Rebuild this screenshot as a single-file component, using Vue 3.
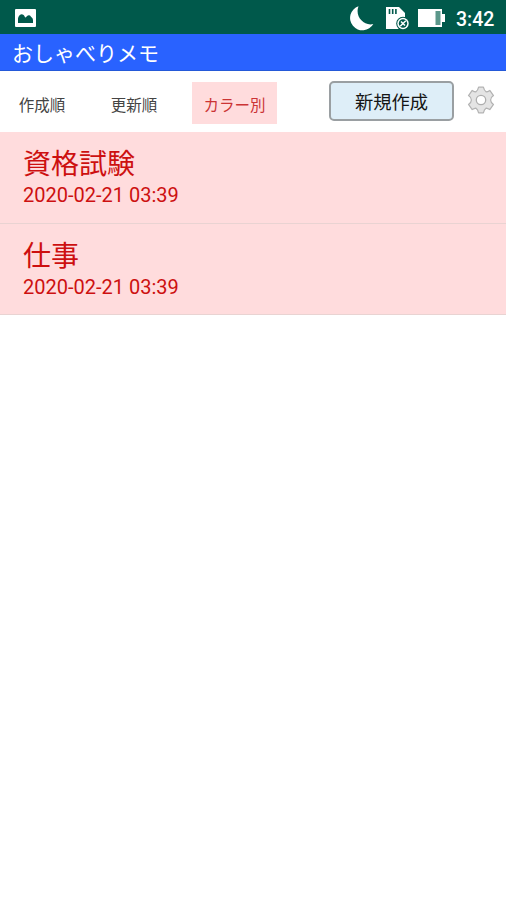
<script setup>
import { ref } from 'vue'

const tabs = ['作成順', '更新順', 'カラー別']
const active = ref(2)
const memos = [
  { title: '資格試験', date: '2020-02-21 03:39' },
  { title: '仕事', date: '2020-02-21 03:39' },
]
</script>

<template>
  <main class="screen">
    <div class="status">
      <svg class="picture" width="21" height="18" viewBox="0 0 21 18">
        <rect width="21" height="18" rx="1" fill="#fff" />
        <path d="M3 14V9.5Q3.5 6 6.5 5.3Q9 5.3 10 8.3Q11 8.8 12 7Q14.5 5.3 16 7.8Q18 9 18 11V14Z" fill="#00594b" />
      </svg>
      <svg class="moon" width="25" height="26" viewBox="0 0 25 26">
        <path d="M9.5 1.2A12.4 12.4 0 1 0 24.3 19C15 21.5 5.5 11.5 9.5 1.2Z" fill="#fff" />
      </svg>
      <svg class="card" width="25" height="24" viewBox="0 0 25 24">
        <path d="M1 1H14L20 7V23H1Z" fill="#fff" />
        <path d="M4.5 3V8M7.7 3V8M10.9 3V8" stroke="#00594b" stroke-width="1.6" />
        <circle cx="18" cy="17.5" r="6.8" fill="#00594b" />
        <circle cx="18" cy="17.5" r="5.7" fill="#fff" />
        <circle cx="18" cy="17.5" r="4.2" fill="#00594b" />
        <path d="M16 15.5L20 19.5M20.8 14.7L15.2 20.3" stroke="#fff" stroke-width="1.5" />
      </svg>
      <svg class="battery" width="28" height="20" viewBox="0 0 28 20">
        <path d="M0 1H24V6H27V14H24V19H0Z" fill="#fff" />
        <path d="M17.5 3H22.5V17H17.5Z" fill="#5b978a" />
      </svg>
      <span class="time">3:42</span>
    </div>
    <header class="title">おしゃべりメモ</header>
    <nav class="toolbar">
      <button
        v-for="(tab, i) in tabs"
        :key="tab"
        class="tab"
        :class="{ active: active === i }"
        @click="active = i"
      >{{ tab }}</button>
      <button class="create">新規作成</button>
      <button class="settings" aria-label="設定">
        <svg width="28" height="28" viewBox="0 0 28 28">
          <path
            d="M11.6 1.2H16.4Q17.2 4.8 19.2 5.9Q20.6 5.8 22.8 4.4L26.5 9.6Q23.6 11.5 23.6 14Q23.6 16.5 26.5 18.4L22.8 23.6Q20.6 22.2 19.2 22.1Q17.2 23.2 16.4 26.8H11.6Q10.8 23.2 8.8 22.1Q7.4 22.2 5.2 23.6L1.5 18.4Q4.4 16.5 4.4 14Q4.4 11.5 1.5 9.6L5.2 4.4Q7.4 5.8 8.8 5.9Q10.8 4.8 11.6 1.2Z"
            fill="#e4e4e4" stroke="#b2b2b2" stroke-width="1.2" stroke-linejoin="round"
          />
          <circle cx="14" cy="14" r="4.7" fill="#fff" stroke="#aeaeae" stroke-width="1.3" />
        </svg>
      </button>
    </nav>
    <ul class="list">
      <li v-for="memo in memos" :key="memo.title" class="memo">
        <div class="name">{{ memo.title }}</div>
        <div class="date">{{ memo.date }}</div>
      </li>
    </ul>
  </main>
</template>

<style>
body {
  margin: 0;
  background: #fff;
}
</style>

<style scoped>
.screen {
  height: 900px;
  overflow: hidden;
  background: #fff;
  font-family: Roboto, "Noto Sans CJK JP", sans-serif;
}
button {
  margin: 0;
  padding: 0;
  border: 0;
  background: none;
  font-family: inherit;
}
svg {
  display: block;
  flex: none;
}
.status {
  display: flex;
  align-items: center;
  box-sizing: border-box;
  height: 34px;
  padding: 2px 11px 0 15px;
  background: #00594b;
}
.moon {
  margin-left: auto;
}
.card {
  margin-left: 11px;
}
.battery {
  margin-left: 8px;
}
.time {
  width: 39px;
  margin-left: 10px;
  padding-top: 3px;
  color: #fff;
  font-size: 19.5px;
  font-weight: 500;
  line-height: 30px;
  white-space: nowrap;
}
.title {
  box-sizing: border-box;
  height: 37px;
  padding: 2px 0 0 12px;
  border-bottom: 1px solid #2459d8;
  background: #2962ff;
  color: #fff;
  font-size: 21px;
  line-height: 37px;
}
.toolbar {
  display: flex;
  align-items: center;
  box-sizing: border-box;
  height: 61px;
  padding-right: 11px;
}
.tab {
  width: 84px;
  height: 42px;
  margin-top: 2px;
  margin-right: 8px;
  padding-top: 2px;
  color: #444;
  font-size: 15.5px;
}
.tab.active {
  width: 85px;
  margin-left: 8px;
  background: #ffdcdd;
  color: #cb3435;
}
.create {
  box-sizing: border-box;
  width: 125px;
  height: 40px;
  margin-top: -1px;
  margin-left: auto;
  padding-bottom: 1px;
  border: 2px solid #9a9fa2;
  border-radius: 5px;
  background: #deeef8;
  color: #151515;
  font-size: 18.3px;
}
.settings {
  margin-left: 13px;
  margin-top: -3px;
}
.list {
  margin: 0;
  padding: 0;
  list-style: none;
}
.memo {
  box-sizing: border-box;
  height: 91.5px;
  padding: 13px 23px 0;
  border-bottom: 1px solid #e9d3d2;
  background: #ffdcdd;
  color: #cd1010;
}
.name {
  height: 38px;
  font-size: 28px;
  line-height: 40px;
}
.date {
  height: 25px;
  font-size: 20px;
  line-height: 25.5px;
}
</style>
